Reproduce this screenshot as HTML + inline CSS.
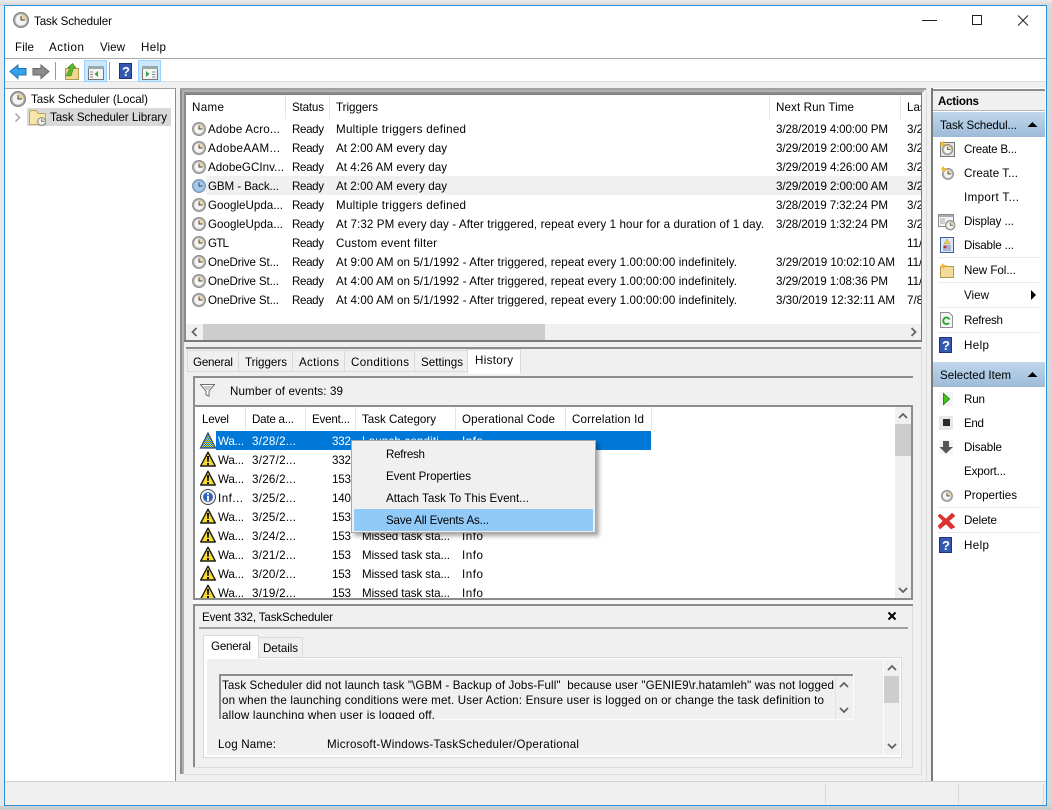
<!DOCTYPE html>
<html><head><meta charset="utf-8"><title>Task Scheduler</title>
<style>
html,body{margin:0;padding:0;background:#e4e4e4;overflow:hidden}
svg{display:block}
text{font-family:"Liberation Sans",sans-serif;font-size:11.6px;fill:#000;white-space:pre}
.b{font-weight:bold}.w{fill:#fff}
</style></head><body>
<svg width="1052" height="810" viewBox="0 0 1052 810" xmlns="http://www.w3.org/2000/svg">
<defs>
<linearGradient id="sec" x1="0" y1="0" x2="0" y2="1"><stop offset="0" stop-color="#c0d7ed"/><stop offset="1" stop-color="#9dbbd8"/></linearGradient>
<linearGradient id="outer" x1="0" y1="0" x2="0" y2="1"><stop offset="0" stop-color="#ececec"/><stop offset=".006" stop-color="#d8d8d8"/><stop offset=".99" stop-color="#d8d8d8"/><stop offset="1" stop-color="#c8c8c8"/></linearGradient>
<filter id="sh" x="-5%" y="-10%" width="112%" height="125%"><feGaussianBlur stdDeviation="2"/></filter>
<pattern id="dith" width="2" height="2" patternUnits="userSpaceOnUse"><rect width="2" height="2" fill="#0078d7"/><rect width="1" height="1" fill="#f2d42c"/><rect x="1" y="1" width="1" height="1" fill="#f2d42c"/></pattern>
<g id="clk"><circle cx="7" cy="7" r="6.5" fill="#b0b0b0" stroke="#8e8e8e"/><circle cx="7" cy="7" r="4.7" fill="#f6f5ef"/><path d="M7 2.300A4.700 4.700 0 0 1 11.700 7H7z" fill="#ecd9a8"/><path d="M7 3.500V7H10.500" fill="none" stroke="#444" stroke-width="1"/></g>
<g id="clkb"><circle cx="7" cy="7" r="6.5" fill="#8fb4d8" stroke="#7a9ab8"/><circle cx="7" cy="7" r="4.8" fill="#a9c9e8"/><path d="M7 3.500V7H10.500" fill="none" stroke="#345" stroke-width="1"/></g>
<g id="warn"><path d="M8 1.200L15.300 15H.7z" fill="#f7dc2f" stroke="#1a1a1a" stroke-width="1.400" stroke-linejoin="round"/><path d="M6.900 5h2.200l-.4 6H7.300zM7 12h2v2H7z" fill="#111"/></g>
<g id="help"><rect width="13" height="16" fill="#2f4f9f"/><rect x=".5" y=".5" width="12" height="15" fill="#3558b0" stroke="#1e3478"/><text x="3" y="13" class="b w" style="font-size:13px">?</text></g>
<g id="up"><path d="M-4 2L0 -2L4 2" fill="none" stroke="#606060" stroke-width="1.7"/></g>
<g id="dn"><path d="M-4 -2L0 2L4 -2" fill="none" stroke="#606060" stroke-width="1.7"/></g>
<clipPath id="top"><rect x="186" y="95" width="735" height="228"/></clipPath>
<clipPath id="ev"><rect x="196" y="407" width="699" height="191"/></clipPath>
<clipPath id="msg"><rect x="220" y="676" width="615" height="43"/></clipPath>
</defs>

<rect width="1052" height="810" fill="url(#outer)"/>
<rect x="0" y="6" width="4" height="800" fill="#e8e8e8"/>
<!-- window -->
<rect x="4.500" y="5.500" width="1042" height="800" fill="#fff" stroke="#2b8fd8"/>
<rect x="5" y="81" width="1041" height="724" fill="#f0f0f0"/>
<rect x="5" y="58" width="1041" height="1" fill="#a8a8a8"/>
<rect x="5" y="81" width="1041" height="1" fill="#dcdcdc"/>

<!-- title -->
<g transform="translate(13,12)"><circle cx="8" cy="8" r="7.5" fill="#a8a8a8" stroke="#808080"/><circle cx="8" cy="8" r="5.6" fill="#f4f4f0"/><path d="M8 2.400A5.600 5.600 0 0 1 13.600 8H8z" fill="#e8d4a0"/><path d="M8 4V8H12" fill="none" stroke="#444"/></g>
<text x="34" y="25" textLength="78">Task Scheduler</text>
<text x="15" y="51" textLength="19">File</text>
<text x="49" y="51" textLength="35">Action</text>
<text x="100" y="51" textLength="25">View</text>
<text x="141" y="51" textLength="25">Help</text>
<path d="M927 20.500H937" stroke="#222" stroke-width="1"/>
<path d="M922 20.500H937" stroke="#222"/>
<rect x="972.500" y="15.500" width="9" height="9" fill="none" stroke="#222"/>
<path d="M1018 15.500L1028 25.500M1028 15.500L1018 25.500" stroke="#222"/>

<!-- toolbar -->
<path d="M10 71.500L18 65V68.500H26V75H18V78.500z" fill="#36a0ea" stroke="#2270b0"/>
<path d="M49 71.500L41 65V68.500H33V75H41V78.500z" fill="#8c8c8c" stroke="#666"/>
<rect x="55" y="62" width="1" height="18" fill="#999"/>
<path d="M65.500 68.500H78.500V79.500H65.500z" fill="#f0d890" stroke="#b09a50"/>
<path d="M66 76L70 68H67.500L72.500 63.500L76 68H73.500L71 76z" fill="#5cb82c" stroke="#3e8a18" stroke-width=".6"/>
<rect x="84.500" y="60.500" width="22" height="21" fill="#cce8ff" stroke="#99d1ff"/>
<rect x="88.500" y="66.500" width="15" height="13" fill="#f4f4f4" stroke="#777"/><rect x="88" y="66" width="16" height="3" fill="#9aa"/><path d="M98 71V77L94.500 74z" fill="#3aa83a"/><path d="M90 72H93M90 74.500H93M90 77H93" stroke="#889"/>
<rect x="109" y="62" width="1" height="18" fill="#999"/>
<g transform="translate(119,63)"><use href="#help"/></g>
<rect x="138.500" y="60.500" width="22" height="21" fill="#cce8ff" stroke="#99d1ff"/>
<rect x="142.500" y="66.500" width="15" height="13" fill="#f4f4f4" stroke="#777"/><rect x="142" y="66" width="16" height="3" fill="#9aa"/><path d="M146 71V77L149.500 74z" fill="#3aa83a"/><path d="M152 72H155.500M152 74.500H155.500M152 77H155.500" stroke="#889"/>

<!-- left pane -->
<rect x="5" y="88" width="171" height="693" fill="#fff"/>
<rect x="5" y="88" width="171" height="1" fill="#a0a0a0"/>
<rect x="175" y="88" width="1" height="693" fill="#8c8c8c"/>
<g transform="translate(10,91)"><circle cx="8" cy="8" r="7.500" fill="#a8a8a8" stroke="#808080"/><circle cx="8" cy="8" r="5.600" fill="#f4f4f0"/><path d="M8 2.400A5.600 5.600 0 0 1 13.600 8H8z" fill="#e8d4a0"/><path d="M8 4V8H12" fill="none" stroke="#444"/></g>
<text x="31" y="103" textLength="117">Task Scheduler (Local)</text>
<rect x="27" y="108" width="144" height="18" fill="#d9d9d9"/>
<path d="M15.500 113.500L19.500 117.500L15.500 121.500" fill="none" stroke="#a6a6a6" stroke-width="1.500"/>
<path d="M29.500 112.500V124.500H45.500V113.500H38L36 110.500H30.500z" fill="#f7e6a8" stroke="#bfa55c"/>
<g transform="translate(37,117) scale(.65)"><use href="#clk"/></g>
<text x="50" y="121" textLength="117">Task Scheduler Library</text>

<!-- centre frame stripes -->
<rect x="177" y="82" width="755" height="699" fill="#f0f0f0"/>
<rect x="180" y="88" width="2" height="686" fill="#8c8c8c"/>
<rect x="182" y="88" width="2" height="686" fill="#b0b0b0"/>
<rect x="184" y="88" width="2" height="254" fill="#8c8c8c"/>
<rect x="180" y="88" width="746" height="2" fill="#a0a0a0"/>
<rect x="182" y="90" width="742" height="2" fill="#b0b0b0"/>
<rect x="184" y="92" width="738" height="2" fill="#8c8c8c"/>
<rect x="926" y="88" width="1" height="693" fill="#dcdcdc"/>
<rect x="921" y="347" width="1" height="427" fill="#dcdcdc"/>
<rect x="184" y="774" width="738" height="1" fill="#dcdcdc"/>

<!-- top list -->
<rect x="186" y="94" width="735" height="248" fill="#fff"/>
<rect x="186" y="94" width="735" height="1" fill="#7a7a7a"/>
<rect x="921" y="92" width="1" height="250" fill="#7a7a7a"/>
<rect x="285" y="95" width="1" height="24" fill="#e5e5e5"/><rect x="329" y="95" width="1" height="24" fill="#e5e5e5"/><rect x="769" y="95" width="1" height="24" fill="#e5e5e5"/><rect x="900" y="95" width="1" height="24" fill="#e5e5e5"/>
<rect x="206" y="176" width="715" height="19" fill="#f0f0f0"/>
<g clip-path="url(#top)">
<text x="192" y="111" textLength="32">Name</text><text x="292" y="111" textLength="32">Status</text><text x="336" y="111" textLength="42">Triggers</text><text x="776" y="111" textLength="78">Next Run Time</text><text x="907" y="111">Last</text>
<g transform="translate(192,122)"><use href="#clk"/></g><text x="208" y="133" textLength="72">Adobe Acro...</text><text x="292" y="133" textLength="32">Ready</text><text x="336" y="133" textLength="130">Multiple triggers defined</text><text x="776" y="133" textLength="112">3/28/2019 4:00:00 PM</text><text x="907" y="133">3/28</text>
<g transform="translate(192,141)"><use href="#clk"/></g><text x="208" y="152" textLength="72">AdobeAAM...</text><text x="292" y="152" textLength="32">Ready</text><text x="336" y="152" textLength="111">At 2:00 AM every day</text><text x="776" y="152" textLength="112">3/29/2019 2:00:00 AM</text><text x="907" y="152">3/28</text>
<g transform="translate(192,160)"><use href="#clk"/></g><text x="208" y="171" textLength="76">AdobeGCInv...</text><text x="292" y="171" textLength="32">Ready</text><text x="336" y="171" textLength="111">At 4:26 AM every day</text><text x="776" y="171" textLength="112">3/29/2019 4:26:00 AM</text><text x="907" y="171">3/28</text>
<g transform="translate(192,179)"><use href="#clkb"/></g><text x="208" y="190" textLength="71">GBM - Back...</text><text x="292" y="190" textLength="32">Ready</text><text x="336" y="190" textLength="111">At 2:00 AM every day</text><text x="776" y="190" textLength="112">3/29/2019 2:00:00 AM</text><text x="907" y="190">3/28</text>
<g transform="translate(192,198)"><use href="#clk"/></g><text x="208" y="209" textLength="75">GoogleUpda...</text><text x="292" y="209" textLength="32">Ready</text><text x="336" y="209" textLength="130">Multiple triggers defined</text><text x="776" y="209" textLength="112">3/28/2019 7:32:24 PM</text><text x="907" y="209">3/28</text>
<g transform="translate(192,217)"><use href="#clk"/></g><text x="208" y="228" textLength="75">GoogleUpda...</text><text x="292" y="228" textLength="32">Ready</text><text x="336" y="228" textLength="428">At 7:32 PM every day - After triggered, repeat every 1 hour for a duration of 1 day.</text><text x="776" y="228" textLength="112">3/28/2019 1:32:24 PM</text><text x="907" y="228">3/28</text>
<g transform="translate(192,236)"><use href="#clk"/></g><text x="208" y="247" textLength="21">GTL</text><text x="292" y="247" textLength="32">Ready</text><text x="336" y="247" textLength="101">Custom event filter</text><text x="907" y="247">11/3</text>
<g transform="translate(192,255)"><use href="#clk"/></g><text x="208" y="266" textLength="71">OneDrive St...</text><text x="292" y="266" textLength="32">Ready</text><text x="336" y="266" textLength="401">At 9:00 AM on 5/1/1992 - After triggered, repeat every 1.00:00:00 indefinitely.</text><text x="776" y="266" textLength="119">3/29/2019 10:02:10 AM</text><text x="907" y="266">11/3</text>
<g transform="translate(192,274)"><use href="#clk"/></g><text x="208" y="285" textLength="71">OneDrive St...</text><text x="292" y="285" textLength="32">Ready</text><text x="336" y="285" textLength="401">At 4:00 AM on 5/1/1992 - After triggered, repeat every 1.00:00:00 indefinitely.</text><text x="776" y="285" textLength="112">3/29/2019 1:08:36 PM</text><text x="907" y="285">11/3</text>
<g transform="translate(192,293)"><use href="#clk"/></g><text x="208" y="304" textLength="71">OneDrive St...</text><text x="292" y="304" textLength="32">Ready</text><text x="336" y="304" textLength="401">At 4:00 AM on 5/1/1992 - After triggered, repeat every 1.00:00:00 indefinitely.</text><text x="776" y="304" textLength="119">3/30/2019 12:32:11 AM</text><text x="907" y="304">7/8</text>
</g>
<!-- h scroll -->
<rect x="186" y="324" width="735" height="16" fill="#f0f0f0"/>
<rect x="203" y="324" width="342" height="16" fill="#cdcdcd"/>
<path d="M196.500 328L192.500 332L196.500 336" fill="none" stroke="#606060" stroke-width="1.700"/>
<path d="M911.500 328L915.500 332L911.500 336" fill="none" stroke="#606060" stroke-width="1.700"/>
<rect x="184" y="340" width="738" height="2" fill="#7a7a7a"/>

<!-- lower panel -->
<rect x="186" y="347" width="735" height="2" fill="#8c8c8c"/>
<rect x="187.500" y="350.500" width="51" height="21" fill="#f0f0f0" stroke="#d9d9d9"/>
<rect x="238.500" y="350.500" width="54" height="21" fill="#f0f0f0" stroke="#d9d9d9"/>
<rect x="292.500" y="350.500" width="52" height="21" fill="#f0f0f0" stroke="#d9d9d9"/>
<rect x="344.500" y="350.500" width="70" height="21" fill="#f0f0f0" stroke="#d9d9d9"/>
<rect x="414.500" y="350.500" width="53" height="21" fill="#f0f0f0" stroke="#d9d9d9"/>
<rect x="467.500" y="349.500" width="53" height="23" fill="#fff" stroke="#d9d9d9"/><rect x="468" y="369" width="52" height="5" fill="#fff"/>
<text x="193" y="366" textLength="40">General</text><text x="245" y="366" textLength="42">Triggers</text><text x="299" y="366" textLength="40">Actions</text><text x="351" y="366" textLength="58">Conditions</text><text x="421" y="366" textLength="42">Settings</text><text x="475" y="364" textLength="38">History</text>

<!-- events frame -->
<rect x="193" y="376" width="720" height="228" fill="#f0f0f0"/>
<rect x="193" y="376" width="720" height="2" fill="#8c8c8c"/>
<rect x="193" y="376" width="2" height="224" fill="#8c8c8c"/>
<path d="M200.500 384.500H214.500L209 391V396L206 395V391z" fill="#fff" stroke="#707070"/>
<path d="M203 386H212L208.500 390H206.500z" fill="#c8c8c8"/>
<text x="230" y="395" textLength="113">Number of events: 39</text>
<rect x="195" y="406" width="717" height="193" fill="#fff"/>
<rect x="195" y="405" width="717" height="2" fill="#8c8c8c"/>
<rect x="195" y="598" width="717" height="2" fill="#8c8c8c"/>
<rect x="193" y="600" width="720" height="4" fill="#f8f8f8"/>
<rect x="911" y="405" width="2" height="195" fill="#8c8c8c"/>
<rect x="245" y="407" width="1" height="23" fill="#e5e5e5"/><rect x="305" y="407" width="1" height="23" fill="#e5e5e5"/><rect x="355" y="407" width="1" height="23" fill="#e5e5e5"/><rect x="455" y="407" width="1" height="23" fill="#e5e5e5"/><rect x="565" y="407" width="1" height="23" fill="#e5e5e5"/><rect x="651" y="407" width="1" height="23" fill="#e5e5e5"/>
<text x="202" y="423" textLength="27">Level</text><text x="252" y="423" textLength="42">Date a...</text><text x="312" y="423" textLength="38">Event...</text><text x="362" y="423" textLength="74">Task Category</text><text x="462" y="423" textLength="93">Operational Code</text><text x="572" y="423" textLength="72">Correlation Id</text>
<rect x="216" y="431" width="435" height="19" fill="#0078d7"/>
<g clip-path="url(#ev)">
<path d="M208 433L215.500 448H200.500z" fill="url(#dith)" stroke="#2a4a7a" stroke-width="1.200"/>
<text class="w" x="218" y="445" textLength="26">Wa...</text><text class="w" x="252" y="445" textLength="44">3/28/2...</text><text class="w" x="332" y="445" textLength="19">332</text><text class="w" x="362" y="445" textLength="87">Launch conditi...</text><text class="w" x="462" y="445" textLength="21">Info</text>
<g transform="translate(200,451)"><use href="#warn"/></g><text x="218" y="464" textLength="26">Wa...</text><text x="252" y="464" textLength="44">3/27/2...</text><text x="332" y="464" textLength="19">332</text>
<g transform="translate(200,470)"><use href="#warn"/></g><text x="218" y="483" textLength="26">Wa...</text><text x="252" y="483" textLength="44">3/26/2...</text><text x="332" y="483" textLength="19">153</text>
<g transform="translate(200,489)"><circle cx="8" cy="8" r="7.500" fill="#eeeef2" stroke="#444"/><circle cx="8" cy="8" r="4.900" fill="#2f62b8"/><path d="M7 4H9V5.700H7zM7 6.700H9V12H7z" fill="#fff"/></g><text x="218" y="502" textLength="25">Inf...</text><text x="252" y="502" textLength="44">3/25/2...</text><text x="332" y="502" textLength="19">140</text>
<g transform="translate(200,508)"><use href="#warn"/></g><text x="218" y="521" textLength="26">Wa...</text><text x="252" y="521" textLength="44">3/25/2...</text><text x="332" y="521" textLength="19">153</text>
<g transform="translate(200,527)"><use href="#warn"/></g><text x="218" y="540" textLength="26">Wa...</text><text x="252" y="540" textLength="44">3/24/2...</text><text x="332" y="540" textLength="19">153</text><text x="362" y="540" textLength="88">Missed task sta...</text><text x="462" y="540" textLength="21">Info</text>
<g transform="translate(200,546)"><use href="#warn"/></g><text x="218" y="559" textLength="26">Wa...</text><text x="252" y="559" textLength="44">3/21/2...</text><text x="332" y="559" textLength="19">153</text><text x="362" y="559" textLength="88">Missed task sta...</text><text x="462" y="559" textLength="21">Info</text>
<g transform="translate(200,565)"><use href="#warn"/></g><text x="218" y="578" textLength="26">Wa...</text><text x="252" y="578" textLength="44">3/20/2...</text><text x="332" y="578" textLength="19">153</text><text x="362" y="578" textLength="88">Missed task sta...</text><text x="462" y="578" textLength="21">Info</text>
<g transform="translate(200,584)"><use href="#warn"/></g><text x="218" y="597" textLength="26">Wa...</text><text x="252" y="597" textLength="44">3/19/2...</text><text x="332" y="597" textLength="19">153</text><text x="362" y="597" textLength="88">Missed task sta...</text><text x="462" y="597" textLength="21">Info</text>
</g>
<!-- v scroll events -->
<rect x="895" y="407" width="16" height="191" fill="#f0f0f0"/>
<rect x="895" y="424" width="16" height="32" fill="#cdcdcd"/>
<use href="#up" x="903" y="416"/><use href="#dn" x="903" y="590"/>

<!-- context menu -->
<rect x="354" y="443" width="245" height="93" fill="#000" opacity=".35" filter="url(#sh)"/>
<rect x="351.500" y="440.500" width="244" height="92" fill="#f0f0f0" stroke="#a8a8a8"/>
<rect x="354" y="509" width="239" height="22" fill="#91c9f7"/>
<text x="386" y="458" textLength="39">Refresh</text>
<text x="386" y="480" textLength="85">Event Properties</text>
<text x="386" y="502" textLength="143">Attach Task To This Event...</text>
<text x="386" y="524" textLength="103">Save All Events As...</text>

<!-- event detail -->
<rect x="193" y="604" width="720" height="163" fill="#f0f0f0"/>
<rect x="193" y="604" width="720" height="2" fill="#8c8c8c"/>
<rect x="193" y="604" width="2" height="163" fill="#8c8c8c"/>
<rect x="193" y="767" width="720" height="1" fill="#dcdcdc"/>
<rect x="912" y="606" width="1" height="161" fill="#dcdcdc"/>
<text x="202" y="621" textLength="131">Event 332, TaskScheduler</text>
<path d="M888.500 612.500L895.500 619.500M895.500 612.500L888.500 619.500" stroke="#000" stroke-width="2"/>
<rect x="199" y="627" width="709" height="2" fill="#a0a0a0"/>
<rect x="203.500" y="657.500" width="698" height="100" fill="#fff" stroke="#d9d9d9"/>
<rect x="207" y="659" width="693" height="96" fill="#f0f0f0"/>
<rect x="203.500" y="635.500" width="55" height="23" fill="#fff" stroke="#d9d9d9"/><rect x="204" y="655" width="54" height="4" fill="#fff"/>
<rect x="258.500" y="637.500" width="44" height="20" fill="#f0f0f0" stroke="#d9d9d9"/>
<text x="211" y="650" textLength="40">General</text><text x="263" y="652" textLength="35">Details</text>
<rect x="219" y="674" width="634" height="46" fill="#f0f0f0" stroke="none"/>
<rect x="219" y="674" width="634" height="2" fill="#8c8c8c"/><rect x="219" y="674" width="2" height="46" fill="#8c8c8c"/>
<rect x="219" y="719" width="635" height="1" fill="#fcfcfc"/><rect x="853" y="674" width="1" height="46" fill="#fcfcfc"/>
<rect x="835" y="676" width="1" height="43" fill="#e2e2e2"/>
<g clip-path="url(#msg)">
<text x="222" y="689" textLength="612">Task Scheduler did not launch task "\GBM - Backup of Jobs-Full"  because user "GENIE9\r.hatamleh" was not logged</text>
<text x="222" y="704" textLength="602">on when the launching conditions were met. User Action: Ensure user is logged on or change the task definition to</text>
<text x="222" y="719" textLength="213">allow launching when user is logged off.</text>
</g>
<use href="#up" x="844" y="685"/><use href="#dn" x="844" y="710"/>
<text x="218" y="748" textLength="58">Log Name:</text>
<text x="327" y="748" textLength="252">Microsoft-Windows-TaskScheduler/Operational</text>
<rect x="883" y="659" width="1" height="96" fill="#fcfcfc"/>
<rect x="884" y="676" width="15" height="27" fill="#cdcdcd"/>
<use href="#up" x="892" y="668"/><use href="#dn" x="892" y="746"/>

<!-- status bar -->
<rect x="5" y="781" width="1041" height="1" fill="#d0d0d0"/>
<rect x="825" y="784" width="1" height="20" fill="#d8d8d8"/><rect x="958" y="784" width="1" height="20" fill="#d8d8d8"/><rect x="1043" y="784" width="1" height="20" fill="#d8d8d8"/>

<!-- actions -->
<rect x="932" y="88" width="114" height="693" fill="#fff"/>
<rect x="931" y="88" width="2" height="693" fill="#7a7a7a"/>
<rect x="933" y="89" width="112" height="2" fill="#8c8c8c"/>
<rect x="933" y="91" width="112" height="19" fill="#f0f0f0"/>
<rect x="933" y="110" width="112" height="1" fill="#b5b5b5"/>
<text class="b" x="938" y="105" textLength="41">Actions</text>
<rect x="933" y="112" width="112" height="25" fill="url(#sec)"/>
<text x="940" y="129" textLength="77">Task Schedul...</text>
<path d="M1027.500 127L1032.500 122L1037.500 127z" fill="#000"/>
<g transform="translate(940,141)"><rect x=".5" y="1.500" width="14" height="14" fill="#e8e4dc" stroke="#777"/><use href="#clk" transform="translate(2,3) scale(.8)"/><path d="M1 1L3 .5L4 0L4.500 2.500L6 3.500L4 4.500L3 6L2 4.500L0 3.500z" fill="#f5b82c"/></g>
<text x="964" y="153" textLength="53">Create B...</text>
<g transform="translate(941,166)"><use href="#clk" transform="translate(1,2) scale(.85)"/><path d="M2 0L3.500 2L6 2.500L4 4.500L3 6.500L1.500 4.500L0 3.500z" fill="#f5b82c"/></g>
<text x="964" y="177" textLength="54">Create T...</text>
<text x="964" y="201" textLength="55">Import T...</text>
<g transform="translate(938,214)"><rect x=".5" y=".5" width="15" height="12" fill="#f4f4f4" stroke="#8a8a8a"/><rect x="1" y="1" width="14" height="2" fill="#aab"/><path d="M2 5H7M2 7H7M2 9H7" stroke="#aaa"/><use href="#clk" transform="translate(7,6) scale(.75)"/></g>
<text x="964" y="225" textLength="50">Display ...</text>
<g transform="translate(940,237)"><rect x=".5" y=".5" width="13" height="15" fill="#dfe8f6" stroke="#3b5f9a"/><path d="M7 2L10 7H4z" fill="#f2d42c" stroke="#a88"  stroke-width=".5"/><path d="M3 9H11M3 11H11M3 13H11" stroke="#6a84b0"/><circle cx="5" cy="10" r="1.500" fill="#c03030"/></g>
<text x="964" y="249" textLength="50">Disable ...</text>
<rect x="938" y="257" width="101" height="1" fill="#eaeaea"/>
<g transform="translate(940,263)"><path d="M.5 3.500H13.500V14.500H.5z" fill="#f2dc9c" stroke="#b09a50"/><path d="M3 0L4 2L7 2.500L4.500 4L4 6.500L2.500 4.500L0 4z" fill="#f5b82c"/></g>
<text x="964" y="274" textLength="52">New Fol...</text>
<rect x="938" y="282" width="101" height="1" fill="#eaeaea"/>
<text x="964" y="299" textLength="25">View</text>
<path d="M1031 290V300L1036 295z" fill="#000"/>
<rect x="938" y="307" width="101" height="1" fill="#eaeaea"/>
<g transform="translate(940,312)"><path d="M.5 .5H9L12.500 4V15.500H.5z" fill="#f4f4f4" stroke="#909090"/><path d="M9.500 7.500A3.300 3.300 0 1 0 9 11" fill="none" stroke="#2fa82f" stroke-width="2"/></g>
<text x="964" y="324" textLength="39">Refresh</text>
<rect x="938" y="332" width="101" height="1" fill="#eaeaea"/>
<g transform="translate(939,337)"><use href="#help"/></g>
<text x="964" y="349" textLength="25">Help</text>

<rect x="933" y="362" width="112" height="25" fill="url(#sec)"/>
<text x="940" y="379" textLength="71">Selected Item</text>
<path d="M1027.500 377L1032.500 372L1037.500 377z" fill="#000"/>
<rect x="939" y="392" width="14" height="14" fill="#f4f4f4"/><path d="M943.500 393.500V404.500L949.500 399z" fill="#45c022" stroke="#2e8c14"/>
<text x="964" y="403" textLength="21">Run</text>
<rect x="939" y="416" width="14" height="14" fill="#e8e8e8"/><rect x="943" y="419" width="7" height="7" fill="#2a2a2a"/>
<text x="964" y="427" textLength="20">End</text>
<rect x="939" y="440" width="14" height="14" fill="#f4f4f4"/><path d="M943 441H949V447H953L946 453.500L939.500 447H943z" fill="#555"/>
<text x="964" y="451" textLength="38">Disable</text>
<text x="964" y="475" textLength="42">Export...</text>
<g transform="translate(941,490) scale(.85)"><use href="#clk"/></g>
<text x="964" y="499" textLength="53">Properties</text>
<rect x="938" y="507" width="101" height="1" fill="#eaeaea"/>
<path d="M940 514L946 519L952 513L955 516L949 521L955 527L951 529L946 524L940 529L938 526L943 521L938 516z" fill="#e03030" stroke="#c02020" stroke-width=".5"/>
<text x="964" y="524" textLength="33">Delete</text>
<rect x="938" y="532" width="101" height="1" fill="#eaeaea"/>
<g transform="translate(939,537)"><use href="#help"/></g>
<text x="964" y="549" textLength="25">Help</text>
</svg>
</body></html>
